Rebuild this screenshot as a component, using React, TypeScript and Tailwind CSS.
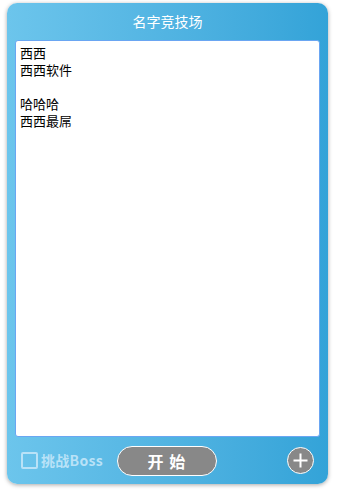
import { useState } from "react";

export default function App() {
  const [text, setText] = useState("西西\n西西软件\n\n哈哈哈\n西西最屌");
  const [boss, setBoss] = useState(false);

  return (
    <div className="w-[338px] h-[490px] bg-white pt-[3px] pl-[7px]">
      <div
        className="w-[321px] h-[481px] rounded-[10px] flex flex-col bg-gradient-to-r from-[#6cc5ec] to-[#33a3d8] shadow-[0_1px_4px_rgba(0,0,0,0.35)]"
        style={{ fontFamily: '"Microsoft YaHei", "Noto Sans CJK SC", sans-serif' }}
      >
        {/* title */}
        <div className="h-[37px] flex items-center justify-center text-white text-[14px]">
          名字竞技场
        </div>

        {/* name list */}
        <div className="mx-[8px] h-[397px] bg-white rounded-[3px] border border-[#6aa6f2] px-[4px] pt-[3px]">
          <textarea
            value={text}
            onChange={(e) => setText(e.target.value)}
            className="w-full h-full resize-none outline-none text-[13px] leading-[17px] text-black"
          />
        </div>

        {/* bottom bar */}
        <div className="flex-1 flex items-center pl-[14px] pr-[14px]">
          <label className="flex items-center gap-[3px] cursor-pointer">
            <span
              onClick={() => setBoss(!boss)}
              className="w-[17px] h-[17px] border-2 border-[#b9e2f7] rounded-[2px]"
            />
            <span className="text-[14px] font-bold text-[#b9e2f7] tracking-[0.3px]">挑战Boss</span>
          </label>
          <button className="ml-[14px] w-[100px] h-[30px] rounded-full bg-[#888888] border border-white text-white text-[16px] font-bold tracking-[1px]">
            开 始
          </button>
          <button className="ml-auto w-[27px] h-[27px] rounded-full bg-[#888888] border border-white flex items-center justify-center">
            <svg width="17" height="17" viewBox="0 0 17 17">
              <path d="M8.5 1.5v14M1.5 8.5h14" stroke="white" strokeWidth="2" />
            </svg>
          </button>
        </div>
      </div>
    </div>
  );
}
